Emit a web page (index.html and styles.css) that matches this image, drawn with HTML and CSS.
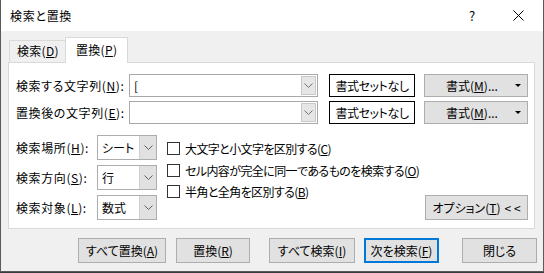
FILE: index.html
```html
<!DOCTYPE html>
<html lang="ja">
<head>
  <meta charset="UTF-8" />
  <title>検索と置換</title>
  <link rel="stylesheet" href="styles.css">
</head>
<body>
  <div class="dialog">
    <div class="titlebar">
      <span class="title">検索と置換</span>
      <span class="help">?</span>
      <span class="close">
        <svg width="11" height="11" viewBox="0 0 11 11"><path d="M0.5 0.5 L10.5 10.5 M10.5 0.5 L0.5 10.5" stroke="#000" stroke-width="1" fill="none"/></svg>
      </span>
    </div>

    <div class="content">
      <!-- tabs -->
      <div class="tabs">
        <div class="tab">検索(<u>D</u>)</div>
        <div class="tab active">置換(<u>P</u>)</div>
      </div>

      <div class="panel">
        <div class="row">
          <label class="lbl">検索する文字列(<u>N</u>):</label>
          <div class="combo">
            <span class="val">[</span>
            <span class="drop"><svg width="9" height="5" viewBox="0 0 9 5"><path d="M0.5 0.5 L4.5 4.5 L8.5 0.5" stroke="#707070" fill="none"/></svg></span>
          </div>
          <div class="preview">書式セットなし</div>
          <div class="btn fmt">書式(<u>M</u>)...<span class="caret"></span></div>
        </div>
        <div class="row">
          <label class="lbl">置換後の文字列(<u>E</u>):</label>
          <div class="combo">
            <span class="val"></span>
            <span class="drop"><svg width="9" height="5" viewBox="0 0 9 5"><path d="M0.5 0.5 L4.5 4.5 L8.5 0.5" stroke="#707070" fill="none"/></svg></span>
          </div>
          <div class="preview">書式セットなし</div>
          <div class="btn fmt">書式(<u>M</u>)...<span class="caret"></span></div>
        </div>

        <div class="options">
          <div class="selects">
            <div class="sel-row">
              <label class="sel-lbl">検索場所(<u>H</u>):</label>
              <div class="select"><span class="val">シート</span><span class="sdrop"><svg width="9" height="5" viewBox="0 0 9 5"><path d="M0.5 0.5 L4.5 4.5 L8.5 0.5" stroke="#606060" fill="none"/></svg></span></div>
            </div>
            <div class="sel-row">
              <label class="sel-lbl">検索方向(<u>S</u>):</label>
              <div class="select"><span class="val">行</span><span class="sdrop"><svg width="9" height="5" viewBox="0 0 9 5"><path d="M0.5 0.5 L4.5 4.5 L8.5 0.5" stroke="#606060" fill="none"/></svg></span></div>
            </div>
            <div class="sel-row">
              <label class="sel-lbl">検索対象(<u>L</u>):</label>
              <div class="select"><span class="val">数式</span><span class="sdrop"><svg width="9" height="5" viewBox="0 0 9 5"><path d="M0.5 0.5 L4.5 4.5 L8.5 0.5" stroke="#606060" fill="none"/></svg></span></div>
            </div>
          </div>

          <div class="checks">
            <div class="check"><span class="box"></span>大文字と小文字を区別する(<u>C</u>)</div>
            <div class="check"><span class="box"></span>セル内容が完全に同一であるものを検索する(<u>O</u>)</div>
            <div class="check"><span class="box"></span>半角と全角を区別する(<u>B</u>)</div>
          </div>

          <div class="btn opt-btn">オプション(<u>T</u>) <span class="lt">&lt; &lt;</span></div>
        </div>
      </div>

      <div class="actions">
        <div class="btn a1">すべて置換(<u>A</u>)</div>
        <div class="btn a2">置換(<u>R</u>)</div>
        <div class="btn a3">すべて検索(<u>I</u>)</div>
        <div class="btn a4 default">次を検索(<u>F</u>)</div>
        <div class="btn a5">閉じる</div>
      </div>
    </div>
  </div>
</body>
</html>
```

FILE: styles.css
```css
* { box-sizing: border-box; margin: 0; padding: 0; }
body {
  font-family: "Noto Sans CJK JP", "Noto Sans", sans-serif;
  font-size: 12px;
  font-feature-settings: "palt";
  color: #000;
  background: #3a3a3a;
  white-space: nowrap;
}

u { text-decoration: underline; text-underline-offset: 1px; }

.dialog {
  width: 544px;
  height: 272px;
  background: #f0f0f0;
  border: 1px solid #5a5a5a;
  border-top: none;
}

/* title bar */
.titlebar {
  height: 31px;
  background: #fff;
  display: flex;
  align-items: center;
  padding-left: 9px;
}
.title { flex: 1; letter-spacing: 0.7px; }
.help { width: 14px; margin-right: 30px; font-size: 13px; }
.close { width: 11px; height: 11px; margin-right: 19px; display: flex; }

.content { padding-left: 7px; }

/* tabs */
.tabs {
  display: flex;
  align-items: flex-end;
  height: 25px;
  margin-top: 6px;
  padding-left: 1px;
}
.tab {
  height: 22px;
  width: 57px;
  border: 1px solid #d9d9d9;
  border-bottom: none;
  background: #f0f0f0;
  padding-left: 7px;
  line-height: 20px;
  letter-spacing: 0.3px;
}
.tab.active {
  height: 26px;
  width: 63px;
  margin-left: -1px;
  margin-bottom: -1px;
  background: #fff;
  padding-left: 10px;
  line-height: 24px;
  position: relative;
  z-index: 1;
}

.panel {
  width: 527px;
  height: 167px;
  background: #fff;
  border: 1px solid #d9d9d9;
  padding: 11px 6px 0 7px;
}

.row {
  display: flex;
  align-items: center;
  height: 23px;
}
.row + .row { margin-top: 4px; }
.lbl { width: 113px; flex-shrink: 0; letter-spacing: 0.6px; }

.combo {
  width: 189px;
  height: 23px;
  border: 1px solid #a8a8a8;
  display: flex;
  align-items: stretch;
  padding: 1px;
}
.combo .val { flex: 1; padding-left: 3px; line-height: 19px; }
.drop {
  width: 15px;
  background: #e6e6e6;
  border: 1px solid #c8c8c8;
  display: flex;
  align-items: center;
  justify-content: center;
}

.preview {
  width: 86px;
  height: 23px;
  margin-left: 11px;
  border: 1px solid #000;
  text-align: center;
  line-height: 21px;
  letter-spacing: -0.4px;
}

.btn {
  height: 25px;
  background: #e1e1e1;
  border: 1px solid #adadad;
  display: flex;
  align-items: center;
  justify-content: center;
  flex-shrink: 0;
}
.fmt {
  width: 104px;
  height: 23px;
  margin-left: 9px;
  position: relative;
  padding-right: 8px;
}
.caret {
  position: absolute;
  right: 6px;
  top: 9px;
  border-left: 3px solid transparent;
  border-right: 3px solid transparent;
  border-top: 3px solid #000;
}

/* options */
.options {
  display: flex;
  margin-top: 11px;
}
.selects { flex-shrink: 0; }
.sel-row {
  display: flex;
  align-items: center;
  height: 24px;
}
.sel-row + .sel-row { margin-top: 6px; }
.sel-lbl { width: 81px; letter-spacing: 0.6px; }
.select {
  width: 60px;
  height: 25px;
  border: 1px solid #adadad;
  display: flex;
}
.select .val { flex: 1; padding-left: 4px; line-height: 23px; }
.sdrop {
  width: 17px;
  background: #e1e1e1;
  border-left: 1px solid #d0d0d0;
  display: flex;
  align-items: center;
  justify-content: center;
}

.checks {
  margin-left: 10px;
  padding-top: 3px;
  flex-shrink: 0;
  letter-spacing: -0.6px;
}
.check {
  display: flex;
  align-items: center;
  height: 21.5px;
}
.box {
  width: 13px;
  height: 13px;
  border: 1px solid #333;
  background: #fff;
  margin-right: 5px;
}

.opt-btn {
  width: 103px;
  margin-left: auto;
  align-self: flex-end;
  margin-bottom: -1px;
}
.lt { margin-left: 4px; }

/* bottom buttons */
.actions {
  display: flex;
  margin-top: 9px;
  padding-left: 70px;
}
.a1 { width: 88px; }
.a2 { width: 74px; margin-left: 10px; }
.a3 { width: 86px; margin-left: 19px; }
.a4 { width: 75px; margin-left: 9px; }
.a5 { width: 75px; margin-left: 23px; }
.default { border: 2px solid #0078d7; }
```
